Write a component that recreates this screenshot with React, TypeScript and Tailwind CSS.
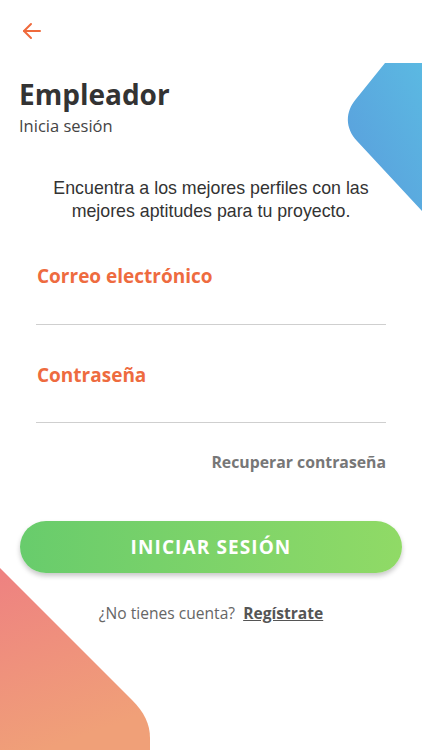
import React from "react";

export default function App() {
  return (
    <div className="relative w-[422px] h-[750px] bg-white overflow-hidden" style={{ fontFamily: '"Open Sans", sans-serif' }}>
      <svg className="absolute left-0 top-0" width="422" height="750" viewBox="0 0 422 750">
        <defs>
          <linearGradient id="blueG" x1="0" y1="1" x2="1" y2="0">
            <stop offset="0" stopColor="#5a9cdc" />
            <stop offset="1" stopColor="#5bb9e2" />
          </linearGradient>
          <linearGradient id="pinkG" x1="0" y1="0" x2="0.3" y2="1">
            <stop offset="0" stopColor="#ee8181" />
            <stop offset="1" stopColor="#f0a078" />
          </linearGradient>
        </defs>
        <path d="M385 63 L422 63 L422 211 L357 141 C345 128 345 112 356 99 Z" fill="url(#blueG)" />
        <path d="M0 568 L132 700 C144 712 150 724 150 738 L150 750 L0 750 Z" fill="url(#pinkG)" />
      </svg>

      <div className="relative flex flex-col">
        <div className="pt-[22px] pl-[21px] h-[40px]">
          <svg width="22" height="18" viewBox="0 0 22 18" fill="none" stroke="#ef6a3c" strokeWidth="2" strokeLinecap="round" strokeLinejoin="round">
            <path d="M19 9 H3" />
            <path d="M10 2 L3 9 L10 16" />
          </svg>
        </div>

        <div className="pl-[19px] mt-[36px]">
          <h1 className="text-[28px] leading-[36px] font-bold text-[#333333]">Empleador</h1>
          <p className="text-[16.5px] leading-[22px] text-[#444444] mt-[3px]">Inicia sesión</p>
        </div>

        <p className="mt-[40px] text-center text-[17.8px] leading-[23px] text-[#333333]" style={{ fontFamily: '"Liberation Sans", Arial, sans-serif' }}>
          Encuentra a los mejores perfiles con las
          <br />
          mejores aptitudes para tu proyecto.
        </p>

        <div className="px-[36px] mt-[40px] flex flex-col">
          <label className="text-[19px] leading-[26px] font-bold text-[#ee6b3f] pl-[1px]">Correo electrónico</label>
          <div className="h-[36px] border-b border-[#cfcfcf]" />
          <label className="text-[19px] leading-[26px] font-bold text-[#ee6b3f] pl-[1px] mt-[37px]">Contraseña</label>
          <div className="h-[35px] border-b border-[#cfcfcf]" />
          <div className="text-right text-[15.8px] leading-[20px] font-bold text-[#777777] mt-[29px]">Recuperar contraseña</div>
        </div>

        <div className="px-[20px] mt-[49px]">
          <button className="w-full h-[52px] rounded-full bg-gradient-to-r from-[#68cc6c] to-[#90da66] shadow-[0_3px_5px_rgba(0,0,0,0.22)] text-white text-[19px] font-bold tracking-[1.1px]">
            INICIAR SESIÓN
          </button>
        </div>

        <div className="mt-[30px] text-center text-[15.6px] leading-[20px] text-[#666666]">
          ¿No tienes cuenta?&nbsp;&nbsp;<span className="font-bold text-[#555555] underline">Regístrate</span>
        </div>
      </div>
    </div>
  );
}
